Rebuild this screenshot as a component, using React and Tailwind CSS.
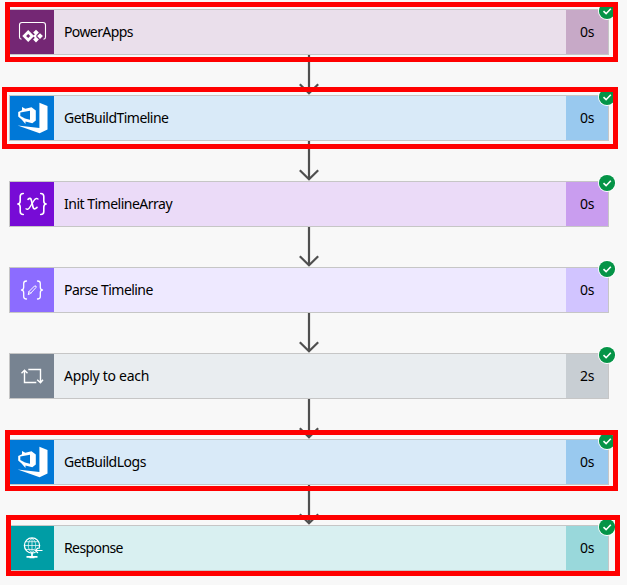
import React from "react";

function PowerAppsIcon() {
  return (
    <svg width="44" height="44" viewBox="0 0 44 44" fill="none">
      <path d="M11.5 29.3Q9.5 29 9.5 27V15Q9.5 12.5 12 12.5H33Q35.5 12.5 35.5 15V27Q35.5 29 33.5 29.3" stroke="#fff" strokeWidth="1.1" />
      <path d="M18.2 22L22.2 26L18.2 30L14.2 26Z" stroke="#fff" strokeWidth="2.7" />
      <path d="M26 19.7l2.9 2.9-2.9 2.9-2.9-2.9zM30 23.2l2.9 2.9-2.9 2.9-2.9-2.9zM26 26.7l2.9 2.9-2.9 2.9-2.9-2.9zM24.9 24.2l1.9 1.9-1.9 1.9-1.9-1.9z" fill="#fff" />
    </svg>
  );
}

function DevOpsIcon() {
  return (
    <svg width="44" height="44" viewBox="0 0 44 44" fill="#fff">
      <path d="M29.4 6.8L37.5 10V33.5L29.6 37.2L7.7 29.6L29.4 32Z" />
      <path fillRule="evenodd" d="M12 11L15.3 12.8L21.5 11.3L25.8 14.4V24.6L22.3 27.2L15.5 25.6V28L11.6 23.4L8.2 20.6V16L12 14.2ZM10.3 16.6V20L15 22.6L20 23.7V14.8Z" />
    </svg>
  );
}

function VariableIcon() {
  return (
    <svg width="44" height="44" viewBox="0 0 44 44" fill="none" stroke="#fff" strokeLinecap="round">
      <path d="M13.3 11.5Q10.2 11.5 10.2 14.5V19Q10.2 22 7.3 22Q10.2 22 10.2 25V29.5Q10.2 32.5 13.3 32.5M30.7 11.5Q33.8 11.5 33.8 14.5V19Q33.8 22 36.7 22Q33.8 22 33.8 25V29.5Q33.8 32.5 30.7 32.5" strokeWidth="1.6" />
      <path d="M18 17.3Q20.6 15 21.4 18.4L23 25Q23.8 28.6 27 25.4" strokeWidth="1.7" />
      <path d="M28 17Q26 15.4 23.7 18.8L20.2 24.6Q18 28.4 16 26.8" strokeWidth="1.3" />
    </svg>
  );
}

function ParseIcon() {
  return (
    <svg width="44" height="44" viewBox="0 0 44 44" fill="none" stroke="#fff" strokeLinecap="round" strokeLinejoin="round">
      <path d="M16.5 13Q13.7 13 13.7 15.5V19Q13.7 22 11.5 22Q13.7 22 13.7 25V28.5Q13.7 31 16.5 31M27.5 13Q30.3 13 30.3 15.5V19Q30.3 22 32.5 22Q30.3 22 30.3 25V28.5Q30.3 31 27.5 31" strokeWidth="1.3" />
      <path d="M18.3 26.3L19 23.5L24.5 18Q26.8 17.3 26 19.5L20.7 25.2ZM19 23.5L20.7 25.2" strokeWidth="1" />
    </svg>
  );
}

function LoopIcon() {
  return (
    <svg width="44" height="44" viewBox="0 0 44 44" fill="none" stroke="#fff">
      <path d="M26.3 28.5H14.5V16.5M11.5 19.2L14.5 16.2L17.5 19.2M18.3 15.5H30.5V28.5M27.2 25.7L30.5 28.7L33 25.7" strokeWidth="1.4" />
    </svg>
  );
}

function ResponseIcon() {
  return (
    <svg width="44" height="44" viewBox="0 0 44 44" fill="none" stroke="#fff">
      <circle cx="22" cy="19.5" r="7.6" strokeWidth="1.3" />
      <path d="M22 12V27M14.5 19.5H29.5M15.7 15.7H28.3M15.7 23.5H25M22 12C17 16 17 23 22 27M22 12C27 16 27 23 22 27" strokeWidth=".7" />
      <path d="M22 27V32M16.5 30.8H27.5M19.5 31.5H24.5" strokeWidth="1.7" />
      <path d="M24.7 24.5H32" stroke="#009da5" strokeWidth="3.5" />
      <path d="M32.5 24.5H25.5M28 22L25.3 24.5L28 27" strokeWidth="1.2" />
    </svg>
  );
}

const steps = [
  { name: "PowerApps", tracking: "tracking-[-0.6px]", time: "0s", Icon: PowerAppsIcon, icon: "bg-[#742774]", body: "bg-[#eadfeb]", end: "bg-[#c7a9c7]", frame: "-left-[4px] -top-[7px] w-[613px] h-[60px]" },
  { name: "GetBuildTimeline", tracking: "tracking-[-0.53px]", time: "0s", Icon: DevOpsIcon, icon: "bg-[#0078d7]", body: "bg-[#d9eaf8]", end: "bg-[#99c9ef]", frame: "-left-[7px] -top-[8px] w-[616px] h-[62px]" },
  { name: "Init TimelineArray", tracking: "tracking-[-0.5px]", time: "0s", Icon: VariableIcon, icon: "bg-[#770bd6]", body: "bg-[#ebdbf8]", end: "bg-[#c99def]" },
  { name: "Parse Timeline", tracking: "tracking-[-0.55px]", time: "0s", Icon: ParseIcon, icon: "bg-[#8c6cff]", body: "bg-[#eee9ff]", end: "bg-[#d1c4ff]" },
  { name: "Apply to each", tracking: "tracking-[-0.29px]", time: "2s", Icon: LoopIcon, icon: "bg-[#778391]", body: "bg-[#e9edf0]", end: "bg-[#c8ced3]" },
  { name: "GetBuildLogs", tracking: "tracking-[-0.5px]", time: "0s", Icon: DevOpsIcon, icon: "bg-[#0078d7]", body: "bg-[#d9eaf8]", end: "bg-[#99c9ef]", frame: "-left-[4px] -top-[9px] w-[613px] h-[61px]" },
  { name: "Response", tracking: "tracking-[-0.6px]", time: "0s", Icon: ResponseIcon, icon: "bg-[#009da5]", body: "bg-[#d9f0f1]", end: "bg-[#99d8db]", frame: "-left-[3px] -top-[10px] w-[614px] h-[61px]" },
];

function Arrow() {
  return (
    <svg className="block mx-auto" width="24" height="40" viewBox="0 0 24 40" fill="none" stroke="#4f4f4f" strokeWidth="2.2">
      <path d="M12 0V38M2.8 29.2L12 38.2L21.2 29.2" />
    </svg>
  );
}

function Step({ name, tracking, time, Icon, icon, body, end }) {
  return (
    <div className={`relative flex h-[46px] border border-[#c6c6c6] ${body}`}>
      <div className={`w-11 shrink-0 ${icon}`}><Icon /></div>
      <div className={`flex flex-1 items-center pl-[10px] ${tracking}`}>{name}</div>
      <div className={`flex w-[42px] items-center justify-center ${end}`}>{time}</div>
      <svg className="absolute -right-[8px] -top-[8px]" width="18" height="18" viewBox="0 0 18 18" fill="none">
        <circle cx="9" cy="9" r="9" fill="#fff" />
        <circle cx="9" cy="9" r="8.1" fill="#059447" />
        <path d="M5.5 9.2L8.1 11.7L12.8 6.8" stroke="#fff" strokeWidth="1.6" />
      </svg>
    </div>
  );
}

export default function App() {
  return (
    <div className="h-[585px] w-[627px] overflow-hidden bg-[#f8f8f8] pl-[9px] pt-[9px] font-['Noto_Sans',sans-serif] text-[14px] leading-5 tracking-[-0.35px] text-black">
      <div className="w-[600px]">
        {steps.map((step, i) => (
          <div key={step.name} className="relative">
            <Step {...step} />
            {i < steps.length - 1 && <Arrow />}
            {step.frame && <div className={`absolute z-10 border-[5px] border-[#ff0000] ${step.frame}`} />}
          </div>
        ))}
      </div>
    </div>
  );
}
